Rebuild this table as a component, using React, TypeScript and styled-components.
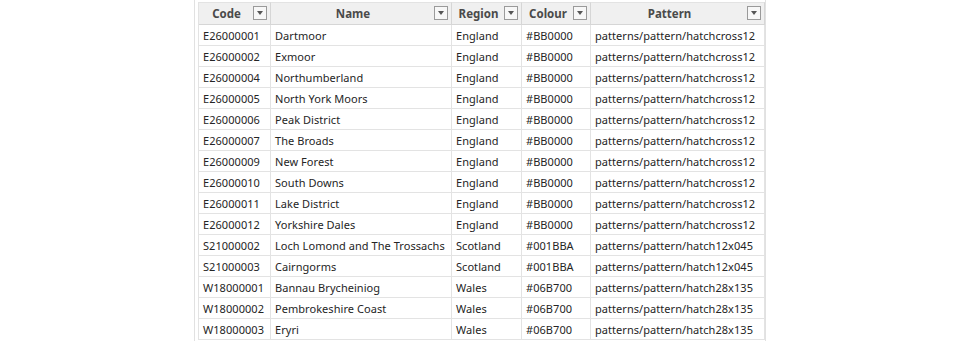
import React from "react";
import styled, { createGlobalStyle } from "styled-components";

const rows: [string, string, string, string, string][] = [
  ["E26000001", "Dartmoor", "England", "#BB0000", "patterns/pattern/hatchcross12"],
  ["E26000002", "Exmoor", "England", "#BB0000", "patterns/pattern/hatchcross12"],
  ["E26000004", "Northumberland", "England", "#BB0000", "patterns/pattern/hatchcross12"],
  ["E26000005", "North York Moors", "England", "#BB0000", "patterns/pattern/hatchcross12"],
  ["E26000006", "Peak District", "England", "#BB0000", "patterns/pattern/hatchcross12"],
  ["E26000007", "The Broads", "England", "#BB0000", "patterns/pattern/hatchcross12"],
  ["E26000009", "New Forest", "England", "#BB0000", "patterns/pattern/hatchcross12"],
  ["E26000010", "South Downs", "England", "#BB0000", "patterns/pattern/hatchcross12"],
  ["E26000011", "Lake District", "England", "#BB0000", "patterns/pattern/hatchcross12"],
  ["E26000012", "Yorkshire Dales", "England", "#BB0000", "patterns/pattern/hatchcross12"],
  ["S21000002", "Loch Lomond and The Trossachs", "Scotland", "#001BBA", "patterns/pattern/hatch12x045"],
  ["S21000003", "Cairngorms", "Scotland", "#001BBA", "patterns/pattern/hatch12x045"],
  ["W18000001", "Bannau Brycheiniog", "Wales", "#06B700", "patterns/pattern/hatch28x135"],
  ["W18000002", "Pembrokeshire Coast", "Wales", "#06B700", "patterns/pattern/hatch28x135"],
  ["W18000003", "Eryri", "Wales", "#06B700", "patterns/pattern/hatch28x135"],
];

const headers = ["Code", "Name", "Region", "Colour", "Pattern"];

const GlobalStyle = createGlobalStyle`
  body {
    margin: 0;
    background: #ffffff;
    font-family: "Noto Sans", "Open Sans", sans-serif;
  }
`;

const Frame = styled.div`
  margin-left: 194px;
  width: 572px;
  height: 341px;
  border-left: 1px solid #e1e1e1;
  border-right: 1px solid #e1e1e1;
  padding: 2px 0 0 3px;
  box-sizing: border-box;
  overflow: hidden;
`;

const Grid = styled.div`
  display: grid;
  grid-template-columns: 72px 181px 70px 69px 174px;
  width: 566px;
  border-left: 1px solid #e3e3e3;
`;

const HeadCell = styled.div`
  position: relative;
  height: 23px;
  background: #f0f0f0;
  border-right: 1px solid #d6d6d6;
  border-bottom: 1px solid #d6d6d6;
  border-top: 1px solid #e3e3e3;
  display: flex;
  align-items: center;
  justify-content: center;
  padding: 0 16px 1px 0;
  font-size: 11.5px;
  font-weight: 700;
  color: #4a4a4a;
  box-sizing: border-box;
`;

const Filter = styled.span`
  position: absolute;
  right: 3px;
  top: 3px;
  width: 14px;
  height: 14px;
  border: 1px solid #9a9a9a;
  background: #f7f7f7;
  box-sizing: border-box;
  display: flex;
  align-items: center;
  justify-content: center;
`;

const Cell = styled.div`
  height: 21px;
  border-right: 1px solid #e3e3e3;
  border-bottom: 1px solid #e3e3e3;
  box-sizing: border-box;
  padding: 0 4px;
  display: flex;
  align-items: center;
  font-size: 11px;
  letter-spacing: 0.05px;
  color: #252525;
  white-space: nowrap;
  overflow: hidden;
`;

const Arrow = () => (
  <svg width="6" height="4" viewBox="0 0 6 4">
    <path d="M0 0h6L3 4z" fill="#555" />
  </svg>
);

export default function App() {
  return (
    <>
      <GlobalStyle />
      <Frame>
        <Grid>
          {headers.map((h) => (
            <HeadCell key={h}>
              {h}
              <Filter>
                <Arrow />
              </Filter>
            </HeadCell>
          ))}
          {rows.map((r) =>
            r.map((v, i) => <Cell key={r[0] + i}>{v}</Cell>)
          )}
        </Grid>
      </Frame>
    </>
  );
}
